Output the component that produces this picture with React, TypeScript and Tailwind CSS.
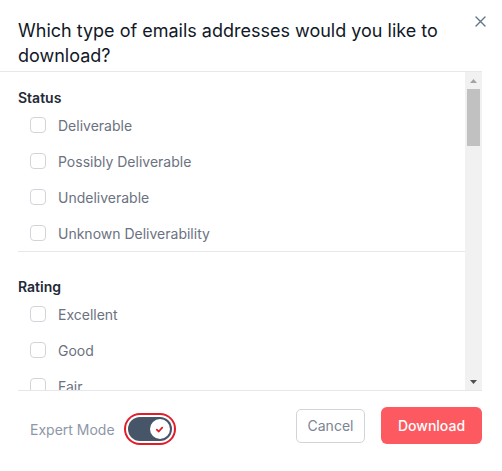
import React, { useEffect, useRef, useState } from 'react';

interface Section {
  title: string;
  options: string[];
}

const sections: Section[] = [
  { title: 'Status', options: ['Deliverable', 'Possibly Deliverable', 'Undeliverable', 'Unknown Deliverability'] },
  { title: 'Rating', options: ['Excellent', 'Good', 'Fair', 'Poor'] },
  { title: 'Free Email', options: ['Free', 'Not Free'] },
  { title: 'Role Account', options: ['Role', 'Not Role'] },
  { title: 'Disposable', options: ['Disposable', 'Not Disposable'] },
  { title: 'Accept All', options: ['Accept All', 'Not Accept All'] },
  { title: 'Domain Type', options: ['Business', 'Personal', 'Education', 'Government'] },
  { title: 'MX Provider', options: ['Google', 'Microsoft', 'Yahoo', 'Zoho', 'Other'] },
  {
    title: 'Reason',
    options: [
      'Accepted Email',
      'Invalid Domain',
      'Invalid Email',
      'Invalid SMTP',
      'Low Quality',
      'Rejected Email',
      'Timeout',
      'Unavailable SMTP',
    ],
  },
];

const TRACK = 318 - 34; // scroll area minus the two arrow buttons

const Checkbox: React.FC<{ label: string }> = ({ label }) => {
  const [checked, setChecked] = useState(false);
  return (
    <label className="flex items-center h-9 pl-3 cursor-pointer">
      <input
        type="checkbox"
        checked={checked}
        onChange={() => setChecked(!checked)}
        className="appearance-none w-4 h-4 rounded-[4px] border border-[#d1d5db] bg-white checked:bg-[#475569] checked:border-[#475569]"
      />
      <span className="ml-3 text-[14px] text-[#6b7280]">{label}</span>
    </label>
  );
};

const App: React.FC = () => {
  const [expert, setExpert] = useState(true);
  const scrollRef = useRef<HTMLDivElement>(null);
  const [thumb, setThumb] = useState({ size: 57, offset: 0 });

  const updateThumb = () => {
    const el = scrollRef.current;
    if (!el) return;
    const size = Math.max(20, (el.clientHeight / el.scrollHeight) * TRACK);
    const max = el.scrollHeight - el.clientHeight;
    const offset = max > 0 ? (el.scrollTop / max) * (TRACK - size) : 0;
    setThumb({ size, offset });
  };

  useEffect(() => {
    updateThumb();
  }, []);

  const scrollBy = (dy: number) => scrollRef.current?.scrollBy({ top: dy });

  return (
    <div className="w-[502px] h-[471px] bg-white flex flex-col font-['Inter',sans-serif]">
      {/* Header */}
      <div className="flex items-start pl-[18px] pr-[16px] pt-[18px] pb-[3px] border-b border-[#e5e7eb] ml-0 mr-[20px]">
        <h2 className="flex-1 text-[18px] leading-[25px] text-[#111827] font-normal pr-6">
          Which type of emails addresses would you like to download?
        </h2>
        <button className="shrink-0 mt-[-2px] mr-[-20px] text-[#64748b]" aria-label="Close">
          <svg width="11" height="11" viewBox="0 0 11 11" fill="none" stroke="currentColor" strokeWidth="1.4" strokeLinecap="round">
            <path d="M1 1L10 10M10 1L1 10" />
          </svg>
        </button>
      </div>

      {/* Scroll body */}
      <div className="flex ml-[18px] mr-[20px] h-[319px] border-b border-[#e5e7eb]">
        <div
          ref={scrollRef}
          onScroll={updateThumb}
          className="flex-1 h-[318px] overflow-y-scroll [scrollbar-width:none]"
        >
          {sections.map((section, i) => (
            <div
              key={section.title}
              className={`${i === 0 ? 'pt-4' : 'pt-[25px]'} border-b border-[#e5e7eb]`}
            >
              <div className="h-[19px] leading-5 text-[14px] font-semibold text-[#1f2937]">{section.title}</div>
              {section.options.map((opt) => (
                <Checkbox key={opt} label={opt} />
              ))}
            </div>
          ))}
        </div>

        {/* Scrollbar */}
        <div className="w-[17px] h-[318px] bg-[#f1f1f1] flex flex-col">
          <button onClick={() => scrollBy(-40)} className="h-[17px] flex items-center justify-center">
            <svg width="7" height="4" viewBox="0 0 7 4">
              <path d="M0 4L3.5 0L7 4Z" fill="#a3a3a3" />
            </svg>
          </button>
          <div className="flex-1 px-[2px]">
            <div
              className="bg-[#c1c1c1] w-full"
              style={{ height: thumb.size, marginTop: thumb.offset }}
            />
          </div>
          <button onClick={() => scrollBy(40)} className="h-[17px] flex items-center justify-center">
            <svg width="7" height="4" viewBox="0 0 7 4">
              <path d="M0 0L7 0L3.5 4Z" fill="#505050" />
            </svg>
          </button>
        </div>
      </div>

      {/* Footer */}
      <div className="flex items-start justify-between pl-[30px] pr-[20px] pt-[16px]">
        <div className="flex items-center h-8 mt-[6px]">
          <span className="text-[14px] text-[#8e97a8]">Expert Mode</span>
          <button
            onClick={() => setExpert(!expert)}
            className={`ml-[13px] w-11 h-6 rounded-full flex items-center px-[2px] ring-2 ring-offset-[2px] ring-[#e11d2a] ${
              expert ? 'bg-[#475569] justify-end' : 'bg-[#cbd5e1] justify-start'
            }`}
          >
            <span className="w-5 h-5 rounded-full bg-white flex items-center justify-center">
              {expert && (
                <svg width="9" height="9" viewBox="0 0 10 10" fill="none" stroke="#e11d2a" strokeWidth="2" strokeLinecap="round" strokeLinejoin="round">
                  <path d="M2 5.2L4.2 7.2L8 3" />
                </svg>
              )}
            </span>
          </button>
        </div>
        <div className="flex items-center gap-4 h-[37px]">
          <button className="h-[34px] w-[69px] rounded-[5px] border border-[#d1d5db] text-[14px] text-[#7b8494] bg-white">
            Cancel
          </button>
          <button className="h-[37px] w-[101px] rounded-[6px] bg-[#fc5a60] text-[14px] font-medium text-white">
            Download
          </button>
        </div>
      </div>
    </div>
  );
};

export default App;
